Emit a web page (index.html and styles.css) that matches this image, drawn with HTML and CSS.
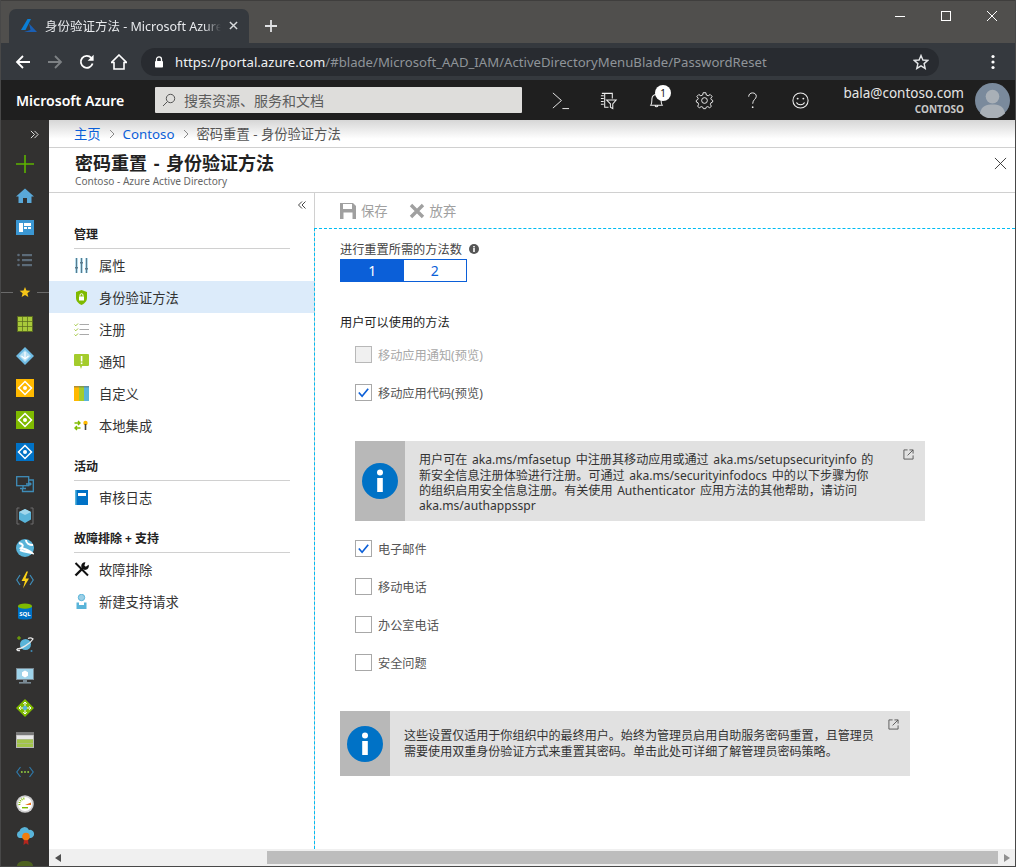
FILE: index.html
```html
<!DOCTYPE html>
<html lang="zh-CN">

<head>
    <meta charset="UTF-8">
    <meta name="viewport" content="width=device-width, initial-scale=1.0">
    <title>身份验证方法 - Microsoft Azure</title>
    <link rel="stylesheet" href="styles.css">
</head>

<body>
    <div class="window">
        <!-- browser tabs -->
        <div class="tabstrip">
            <div class="tab">
                <svg class="favicon" viewBox="0 0 16 13"><path fill="#0a7fd6" d="M6.5 0 L10 0 L4.5 11 L0 11 Z"/><path fill="#1a5fb4" d="M8 4.5 L16 13 L3 13 L9.5 11 Z"/></svg>
                <span class="tab-title">身份验证方法 - Microsoft Azure</span>
                <svg class="tab-close" viewBox="0 0 10 10"><path d="M1 1 L9 9 M9 1 L1 9" stroke="#d8dadc" stroke-width="1.6"/></svg>
            </div>
            <svg class="new-tab" viewBox="0 0 12 12"><path d="M6 0 V12 M0 6 H12" stroke="#e0e2e4" stroke-width="1.8"/></svg>
            <div class="win-controls">
                <svg viewBox="0 0 12 12"><path d="M1 6.5 H11" stroke="#fff" stroke-width="1"/></svg>
                <svg viewBox="0 0 12 12"><rect x="1.5" y="1.5" width="9" height="9" fill="none" stroke="#fff"/></svg>
                <svg viewBox="0 0 12 12"><path d="M1 1 L11 11 M11 1 L1 11" stroke="#fff" stroke-width="1"/></svg>
            </div>
        </div>

        <!-- address bar -->
        <div class="toolbar">
            <svg class="nav-icon" viewBox="0 0 16 16"><path d="M15 8 H2 M8 2 L2 8 L8 14" fill="none" stroke="#fff" stroke-width="1.8"/></svg>
            <svg class="nav-icon" viewBox="0 0 16 16"><path d="M1 8 H14 M8 2 L14 8 L8 14" fill="none" stroke="#7d8184" stroke-width="1.8"/></svg>
            <svg class="nav-icon" viewBox="0 0 16 16"><path d="M13.6 9.5 A6 6 0 1 1 12.3 3.8" fill="none" stroke="#fff" stroke-width="1.8"/><path d="M14.6 0.8 V6.8 H8.6 Z" fill="#fff"/></svg>
            <svg class="nav-icon nav-last" viewBox="0 0 16 16"><path d="M8 1 L15.5 8.5 H13 V15 H3 V8.5 H0.5 Z" fill="none" stroke="#fff" stroke-width="1.6"/></svg>
            <div class="omnibox">
                <svg class="lock" viewBox="0 0 10 12"><path d="M2.5 5 V3.4 A2.5 2.5 0 0 1 7.5 3.4 V5" fill="none" stroke="#fff" stroke-width="1.3"/><rect x="1" y="5" width="8" height="6.5" rx="0.8" fill="#fff"/></svg>
                <span class="url"><span class="url-host">https://portal.azure.com</span>/#blade/Microsoft_AAD_IAM/ActiveDirectoryMenuBlade/PasswordReset</span>
                <svg class="star" viewBox="0 0 16 16"><path d="M8 1.5 L9.9 6 L14.8 6.4 L11.1 9.6 L12.2 14.4 L8 11.8 L3.8 14.4 L4.9 9.6 L1.2 6.4 L6.1 6 Z" fill="none" stroke="#e4e6e8" stroke-width="1.4"/></svg>
            </div>
            <svg class="menu-dots" viewBox="0 0 4 16"><circle cx="2" cy="2.5" r="1.6" fill="#fff"/><circle cx="2" cy="8" r="1.6" fill="#fff"/><circle cx="2" cy="13.5" r="1.6" fill="#fff"/></svg>
        </div>

        <!-- azure top bar -->
        <header class="portal-header">
            <div class="brand">Microsoft Azure</div>
            <div class="search">
                <svg class="search-icon" viewBox="0 0 14 14"><circle cx="8.5" cy="5.5" r="4.2" fill="none" stroke="#555" stroke-width="1"/><path d="M5.5 8.5 L1 13" stroke="#555" stroke-width="1"/></svg>
                <span>搜索资源、服务和文档</span>
            </div>
            <div class="header-icons">
                <svg viewBox="0 0 20 20"><path d="M2 2 L11 10 L2 18" fill="none" stroke="#eee" stroke-width="1"/><path d="M12 18.5 H19" stroke="#eee" stroke-width="1"/></svg>
                <svg viewBox="0 0 20 20"><path d="M3 2.5 H14 V8 M6 2.5 V17 H10 M2 5 H5 M2 8 H5 M2 11 H5 M2 14 H5" fill="none" stroke="#eee" stroke-width="1.1"/><path d="M8 9.5 H18 L14.5 13.5 V18.5 L12 17 V13.5 Z" fill="none" stroke="#eee" stroke-width="1.1"/></svg>
                <div class="bell">
                    <svg viewBox="0 0 20 20"><path d="M4 15 C5.5 13 5 10 5.2 8 C5.5 5 7.5 3.6 10 3.6 C12.5 3.6 14.5 5 14.8 8 C15 10 14.5 13 16 15 Z M8.5 15.5 A1.6 1.6 0 0 0 11.5 15.5" fill="none" stroke="#eee" stroke-width="1.1"/></svg>
                    <span class="badge">1</span>
                </div>
                <svg viewBox="0 0 20 20"><circle cx="10" cy="10" r="3" fill="none" stroke="#eee" stroke-width="1"/><path d="M8.6 1.8 H11.4 L11.9 4.2 L13.9 5 L16 3.7 L18 5.7 L16.6 7.8 L17.4 9.3 L18.6 9.8 V11.6 L16.8 12.4 L16.2 14 L17.2 16.2 L15.4 17.6 L13.4 16.4 L11.8 17 L11.2 18.6 H8.8 L8.2 17 L6.6 16.4 L4.6 17.6 L2.8 16.2 L3.8 14 L3.2 12.4 L1.4 11.6 V9.8 L2.6 9.3 L3.4 7.8 L2 5.7 L4 3.7 L6.1 5 L8.1 4.2 Z" fill="none" stroke="#eee" stroke-width="1"/></svg>
                <svg viewBox="0 0 20 20"><path d="M6 6 C6 3.4 7.8 2 10 2 C12.4 2 14 3.5 14 5.6 C14 8.6 10.2 9 10.2 13.4" fill="none" stroke="#eee" stroke-width="1"/><circle cx="10.2" cy="17" r="0.9" fill="#eee"/></svg>
                <svg viewBox="0 0 20 20"><circle cx="10" cy="10" r="8" fill="none" stroke="#eee" stroke-width="1.1"/><circle cx="7" cy="8" r="1" fill="#eee"/><circle cx="13" cy="8" r="1" fill="#eee"/><path d="M5.8 12 C7 15.2 13 15.2 14.2 12" fill="none" stroke="#eee" stroke-width="1.1"/></svg>
            </div>
            <div class="account">
                <div class="account-name">bala@contoso.com</div>
                <div class="account-org">CONTOSO</div>
            </div>
            <svg class="avatar" viewBox="0 0 36 36"><circle cx="18" cy="18" r="18" fill="#7a8a9c"/><circle cx="18" cy="14" r="7" fill="#a9b0b7"/><path d="M5 31 C7 23 12 22 18 22 C24 22 29 23 31 31 A18 18 0 0 1 5 31 Z" fill="#a9b0b7"/></svg>
        </header>

        <div class="portal-body">
            <!-- service rail -->
            <nav class="rail">
                <div class="rail-toggle">
                    <svg viewBox="0 0 10 10"><path d="M1 1 L5 5 L1 9 M5 1 L9 5 L5 9" fill="none" stroke="#e0e0e0" stroke-width="1.1"/></svg>
                </div>
                <div class="rail-item"><svg viewBox="0 0 18 18"><path d="M9 0 V18 M0 9 H18" stroke="#5db300" stroke-width="1.6"/></svg></div>
                <div class="rail-item"><svg viewBox="0 0 18 18"><path d="M9 1.5 L18 9.5 H15.5 V16 H11 V11 H7 V16 H2.5 V9.5 H0 Z" fill="#59a8d8"/></svg></div>
                <div class="rail-item"><svg viewBox="0 0 18 18"><rect y="1" width="18" height="15" fill="#3b97d3"/><path d="M3 4 H7 V13 H3 Z M8 4 H15 V7 H8 Z M8 8 H11 V10 H8 Z M12 8 H15 V10 H12 Z" fill="#fff"/></svg></div>
                <div class="rail-item"><svg viewBox="0 0 18 18"><g fill="#5c6b78"><circle cx="2.5" cy="4" r="1.3"/><circle cx="2.5" cy="9" r="1.3"/><circle cx="2.5" cy="14" r="1.3"/><rect x="6" y="3" width="10" height="2.2"/><rect x="6" y="8" width="10" height="2.2"/><rect x="6" y="13" width="10" height="2.2"/></g></svg></div>
                <div class="rail-item rail-fav"><svg class="fav-star" viewBox="0 0 18 18"><path d="M9 1.5 L11.2 6.8 L17 7.2 L12.6 10.9 L14 16.5 L9 13.5 L4 16.5 L5.4 10.9 L1 7.2 L6.8 6.8 Z" fill="#f5c518"/></svg></div>
                <div class="rail-item"><svg viewBox="0 0 18 18"><rect x="1" y="1" width="16" height="16" fill="#5a6a20"/><g fill="#a8c93a"><rect x="2" y="2" width="4.2" height="4.2"/><rect x="6.9" y="2" width="4.2" height="4.2"/><rect x="11.8" y="2" width="4.2" height="4.2"/><rect x="2" y="6.9" width="4.2" height="4.2"/><rect x="6.9" y="6.9" width="4.2" height="4.2"/><rect x="11.8" y="6.9" width="4.2" height="4.2"/><rect x="2" y="11.8" width="4.2" height="4.2"/><rect x="6.9" y="11.8" width="4.2" height="4.2"/><rect x="11.8" y="11.8" width="4.2" height="4.2"/></g></svg></div>
                <div class="rail-item"><svg viewBox="0 0 18 18"><path d="M9 0 L18 9 L9 18 L0 9 Z" fill="#6fbbe3"/><path d="M9 3 L15 9 L9 15 L3 9 Z" fill="#b5dff2"/><path d="M9 5 V12 M5.5 9 L9 12 L12.5 9" fill="none" stroke="#fff" stroke-width="1.2"/></svg></div>
                <div class="rail-item"><svg viewBox="0 0 18 18"><rect width="18" height="18" fill="#ffb900"/><path d="M9 2.5 L15.5 9 L9 15.5 L2.5 9 Z" fill="none" stroke="#fff" stroke-width="1.5"/><circle cx="9" cy="9" r="2" fill="#fff"/></svg></div>
                <div class="rail-item"><svg viewBox="0 0 18 18"><rect width="18" height="18" fill="#7fba00"/><path d="M9 2.5 L15.5 9 L9 15.5 L2.5 9 Z" fill="none" stroke="#fff" stroke-width="1.5"/><circle cx="9" cy="9" r="2" fill="#fff"/></svg></div>
                <div class="rail-item"><svg viewBox="0 0 18 18"><rect width="18" height="18" fill="#0072c6"/><path d="M9 2.5 L15.5 9 L9 15.5 L2.5 9 Z" fill="none" stroke="#fff" stroke-width="1.5"/><circle cx="9" cy="9" r="2" fill="#fff"/></svg></div>
                <div class="rail-item"><svg viewBox="0 0 18 18"><g fill="none" stroke="#3f8db8" stroke-width="1.3"><rect x="0.7" y="1.7" width="12" height="9"/><path d="M4 13.5 H10 M7 11 V13.5"/><path d="M13 5 H17.3 V16.5 H6.5 V14"/><path d="M10 9 H15 M13.5 7.5 L15 9 L13.5 10.5"/></g></svg></div>
                <div class="rail-item"><svg viewBox="0 0 18 18"><path d="M3.5 1 H1 V17 H3.5 M14.5 1 H17 V17 H14.5" fill="none" stroke="#6f6f6f" stroke-width="1"/><path d="M9 2 L15 5 V12.5 L9 16 L3 12.5 V5 Z" fill="#59b4d9"/><path d="M9 8 L15 5 L9 2 L3 5 Z" fill="#a0d7ec"/></svg></div>
                <div class="rail-item"><svg viewBox="0 0 18 18"><circle cx="9" cy="9" r="9" fill="#59b4d9"/><path d="M3 4 C7 5 8 7 5 9 C8 10 13 11 16 14 C12 13 8 13 4 11 M10 1 C10 4 13 6 17 6" fill="none" stroke="#fff" stroke-width="2"/></svg></div>
                <div class="rail-item"><svg viewBox="0 0 18 18"><path d="M4 4 L0.8 9 L4 14 M14 4 L17.2 9 L14 14" fill="none" stroke="#3f8db8" stroke-width="1.2"/><path d="M10.5 0.5 L5.5 10 H9 L7 17.5 L13 7.5 H9.5 L12 0.5 Z" fill="#fcd116"/></svg></div>
                <div class="rail-item"><svg viewBox="0 0 18 18"><path d="M2 3 V15 C2 17 16 17 16 15 V3 Z" fill="#0072c6"/><ellipse cx="9" cy="3.2" rx="7" ry="2.6" fill="#7fba00"/><text class="sql-text" x="9" y="13" text-anchor="middle">SQL</text></svg></div>
                <div class="rail-item"><svg viewBox="0 0 18 18"><circle cx="9.5" cy="9.5" r="5.5" fill="#59b4d9"/><path d="M1 14 C5 14 14 9 17 4 C15 2.5 13 3 12 3.5 M1 14 C0.5 15.5 2 16 4 15.5" fill="none" stroke="#e8e8e8" stroke-width="1.3"/><path d="M3 1 V5 M1 3 H5" stroke="#7fba00" stroke-width="1"/><circle cx="15.5" cy="16" r="1" fill="#3f8db8"/></svg></div>
                <div class="rail-item"><svg viewBox="0 0 18 18"><rect y="1" width="18" height="12" fill="#7a8a94"/><rect x="1" y="2" width="16" height="10" fill="#9ed3ea"/><path d="M9 3.5 L12 5.2 V8.7 L9 10.4 L6 8.7 V5.2 Z" fill="#fff"/><rect x="7" y="13" width="4" height="2" fill="#7a8a94"/><rect x="3" y="15" width="12" height="1.6" fill="#7a8a94"/></svg></div>
                <div class="rail-item"><svg viewBox="0 0 18 18"><path d="M9 0 L18 9 L9 18 L0 9 Z" fill="#7fba00"/><path d="M9 3 V15 M3 9 H15 M7.2 4.8 L9 3 L10.8 4.8 M7.2 13.2 L9 15 L10.8 13.2 M4.8 7.2 L3 9 L4.8 10.8 M13.2 7.2 L15 9 L13.2 10.8" fill="none" stroke="#fff" stroke-width="1"/><circle cx="9" cy="9" r="2.2" fill="#59b4d9"/></svg></div>
                <div class="rail-item"><svg viewBox="0 0 18 18"><rect y="1" width="18" height="16" fill="#b8b8b8"/><rect y="1" width="18" height="3" fill="#7a7a7a"/><rect x="1" y="4.5" width="16" height="3.5" fill="#e8e8e8"/><rect x="1" y="8.5" width="16" height="3.5" fill="#a2c44a"/><rect x="1" y="12.5" width="16" height="3.5" fill="#a2c44a"/></svg></div>
                <div class="rail-item"><svg viewBox="0 0 18 18"><path d="M4.5 4 L0.8 9 L4.5 14 M13.5 4 L17.2 9 L13.5 14" fill="none" stroke="#2f78a8" stroke-width="1.2"/><g fill="#8cc63f"><circle cx="5.8" cy="9" r="1"/><circle cx="9" cy="9" r="1"/><circle cx="12.2" cy="9" r="1"/></g></svg></div>
                <div class="rail-item"><svg viewBox="0 0 18 18"><circle cx="9" cy="9" r="8.8" fill="#cfcfcf"/><circle cx="9" cy="9" r="7" fill="#fff"/><path d="M3.5 10 A5.5 5.5 0 0 1 9 3.5" fill="none" stroke="#7fba00" stroke-width="2" stroke-dasharray="1 1"/><path d="M9 10 L15 7.5 V10 Z" fill="#e8731a"/><rect x="6" y="12" width="6" height="1.4" fill="#7fba00"/></svg></div>
                <div class="rail-item"><svg viewBox="0 0 18 18"><path d="M4 11 A3.6 3.6 0 0 1 3.6 4 A5 5 0 0 1 13 3 A4 4 0 0 1 15 11 Z" fill="#59b4d9"/><path d="M8 12 L7.5 18 L10 16.3 L12.5 18 L12 12 Z" fill="#b3261e"/><circle cx="10" cy="9.5" r="3.8" fill="#f27d0c"/></svg></div>
                <div class="rail-item rail-faded"><svg viewBox="0 0 18 18"><path d="M9 2 C4 2 1 4 1 7 V10 H17 V7 C17 4 14 2 9 2 Z" fill="#7fba00"/></svg></div>
            </nav>

            <main class="blade">
                <div class="breadcrumb">
                    <a class="crumb-link">主页</a>
                    <svg class="crumb-sep" viewBox="0 0 6 10"><path d="M1 1 L5 5 L1 9" fill="none" stroke="#888" stroke-width="1"/></svg>
                    <a class="crumb-link">Contoso</a>
                    <svg class="crumb-sep" viewBox="0 0 6 10"><path d="M1 1 L5 5 L1 9" fill="none" stroke="#888" stroke-width="1"/></svg>
                    <span>密码重置 - 身份验证方法</span>
                </div>

                <div class="blade-title">
                    <div>
                        <h1>密码重置 - 身份验证方法</h1>
                        <div class="blade-sub">Contoso - Azure Active Directory</div>
                    </div>
                    <svg class="blade-close" viewBox="0 0 14 14"><path d="M1 1 L13 13 M13 1 L1 13" stroke="#333" stroke-width="1"/></svg>
                </div>

                <div class="blade-main">
                    <aside class="menu">
                        <div class="menu-collapse">
                            <svg viewBox="0 0 8 8"><path d="M4 0.5 L0.5 4 L4 7.5 M7.5 0.5 L4 4 L7.5 7.5" fill="none" stroke="#444" stroke-width="1"/></svg>
                        </div>
                        <div class="menu-heading">管理</div>
                        <div class="menu-item">
                            <svg viewBox="0 0 15 15"><g fill="#b5dcec"><rect x="1" y="0" width="3" height="15"/><rect x="6" y="0" width="3" height="15"/><rect x="11" y="0" width="3" height="15"/></g><g fill="#5a7a8c"><rect x="2" y="0" width="1" height="15"/><rect x="7" y="0" width="1" height="15"/><rect x="12" y="0" width="1" height="15"/><rect x="1" y="9" width="3" height="1.5"/><rect x="6" y="4" width="3" height="1.5"/><rect x="11" y="10" width="3" height="1.5"/></g></svg>
                            <span>属性</span>
                        </div>
                        <div class="menu-item is-active">
                            <svg viewBox="0 0 15 15"><path d="M7.5 0 L13 2 V8 C13 11.5 10 13.8 7.5 15 C5 13.8 2 11.5 2 8 V2 Z" fill="#7fba00"/><rect x="5" y="6.5" width="5" height="4" fill="#fff"/><path d="M6 6.5 V5.2 A1.5 1.5 0 0 1 9 5.2 V6.5" fill="none" stroke="#fff" stroke-width="1"/></svg>
                            <span>身份验证方法</span>
                        </div>
                        <div class="menu-item">
                            <svg viewBox="0 0 15 15"><g fill="none" stroke="#a0c63c" stroke-width="1"><path d="M0.5 2.5 L1.8 3.8 L4 1.5"/><path d="M0.5 7.5 L1.8 8.8 L4 6.5"/><path d="M0.5 12.5 L1.8 13.8 L4 11.5"/></g><path d="M5.5 2.5 H15 M5.5 7.5 H15 M5.5 12.5 H15" stroke="#aaa" stroke-width="1"/></svg>
                            <span>注册</span>
                        </div>
                        <div class="menu-item">
                            <svg viewBox="0 0 15 15"><path d="M1 0 H14 A1 1 0 0 1 15 1 V11 A1 1 0 0 1 14 12 H8 L7 15 L6 12 H1 A1 1 0 0 1 0 11 V1 A1 1 0 0 1 1 0 Z" fill="#a4cc2c"/><rect x="6.8" y="2" width="1.6" height="5.5" fill="#fff"/><rect x="6.8" y="8.5" width="1.6" height="1.6" fill="#fff"/></svg>
                            <span>通知</span>
                        </div>
                        <div class="menu-item">
                            <svg viewBox="0 0 15 15"><rect width="5" height="15" fill="#ffb900"/><rect x="5" width="5" height="15" fill="#a4cc2c"/><rect x="10" width="5" height="15" fill="#59b4d9"/><rect width="15" height="1.5" fill="#666" opacity="0.5"/></svg>
                            <span>自定义</span>
                        </div>
                        <div class="menu-item">
                            <svg viewBox="0 0 15 15"><path d="M0.5 5 H6 M4 3 L6 5 L4 7 M6.5 10 H1 M3 8 L1 10 L3 12" fill="none" stroke="#7fba00" stroke-width="1.4"/><circle cx="11.5" cy="5" r="2.2" fill="#ffb900"/><rect x="10.7" y="6" width="1.6" height="6" fill="#444"/></svg>
                            <span>本地集成</span>
                        </div>
                        <div class="menu-heading">活动</div>
                        <div class="menu-item">
                            <svg viewBox="0 0 15 15"><path d="M1 0 H14 V15 H1 Z" fill="#0072c6"/><rect x="1" width="1.5" height="15" fill="#59b4d9"/><rect x="4" y="3" width="8" height="3" fill="#fff"/></svg>
                            <span>审核日志</span>
                        </div>
                        <div class="menu-heading">故障排除 + 支持</div>
                        <div class="menu-item">
                            <svg viewBox="0 0 15 15"><path d="M1.5 13.5 L9.5 5.5" stroke="#111" stroke-width="2.4"/><path d="M14.6 2.8 A3.8 3.8 0 1 1 11.4 0.3 L10.4 3.4 L11.8 4.8 Z" fill="#111"/><path d="M1.5 1 L14 13.5" stroke="#111" stroke-width="2"/></svg>
                            <span>故障排除</span>
                        </div>
                        <div class="menu-item">
                            <svg viewBox="0 0 15 15"><circle cx="7.5" cy="3.5" r="3.2" fill="#9ccfe6" stroke="#59b4d9"/><path d="M2.5 15 V8.5 H5 V11 H10 V8.5 H12.5 V15 Z" fill="#59b4d9"/></svg>
                            <span>新建支持请求</span>
                        </div>
                    </aside>

                    <section class="pane">
                        <div class="commands">
                            <span class="command">
                                <svg viewBox="0 0 16 16"><path d="M0 0 H13 L16 3 V16 H0 Z" fill="#a0a0a0"/><rect x="3" y="1" width="9" height="5" fill="#fff"/><rect x="3.5" y="9.5" width="9" height="6.5" fill="#fff"/></svg>
                                保存
                            </span>
                            <span class="command">
                                <svg viewBox="0 0 16 16"><path d="M2 2 L14 14 M14 2 L2 14" stroke="#a0a0a0" stroke-width="3.4"/></svg>
                                放弃
                            </span>
                        </div>

                        <div class="pane-content">
                            <div class="field-label">
                                进行重置所需的方法数
                                <svg class="hint" viewBox="0 0 10 10"><circle cx="5" cy="5" r="5" fill="#555"/><rect x="4.2" y="4" width="1.6" height="4" fill="#fff"/><rect x="4.2" y="2" width="1.6" height="1.4" fill="#fff"/></svg>
                            </div>
                            <div class="toggle">
                                <span class="toggle-opt is-on">1</span>
                                <span class="toggle-opt">2</span>
                            </div>

                            <div class="methods-label">用户可以使用的方法</div>

                            <div class="methods">
                                <label class="check is-disabled"><span class="box"></span>移动应用通知(预览)</label>
                                <label class="check">
                                    <span class="box"><svg viewBox="0 0 16 16"><path d="M3 8 L6.5 12 L13 4" fill="none" stroke="#0b5fd8" stroke-width="1.8"/></svg></span>移动应用代码(预览)
                                </label>
                            </div>

                            <div class="notice notice-nested">
                                <div class="notice-strip">
                                    <svg viewBox="0 0 36 36"><circle cx="18" cy="18" r="18" fill="#0072c6"/><circle cx="18" cy="9.5" r="3" fill="#fff"/><rect x="15.2" y="15" width="5.6" height="14" fill="#fff"/></svg>
                                </div>
                                <p class="notice-text">用户可在 aka.ms/mfasetup 中注册其移动应用或通过 aka.ms/setupsecurityinfo 的<br>新安全信息注册体验进行注册。可通过 aka.ms/securityinfodocs 中的以下步骤为你<br>的组织启用安全信息注册。有关使用 Authenticator 应用方法的其他帮助，请访问<br>aka.ms/authappsspr</p>
                                <svg class="notice-link" viewBox="0 0 12 12"><path d="M5 1 H1 V11 H11 V7 M7 1 H11 V5 M11 1 L5 7" fill="none" stroke="#555" stroke-width="1"/></svg>
                            </div>

                            <div class="methods methods-rest">
                                <label class="check">
                                    <span class="box"><svg viewBox="0 0 16 16"><path d="M3 8 L6.5 12 L13 4" fill="none" stroke="#0b5fd8" stroke-width="1.8"/></svg></span>电子邮件
                                </label>
                                <label class="check"><span class="box"></span>移动电话</label>
                                <label class="check"><span class="box"></span>办公室电话</label>
                                <label class="check"><span class="box"></span>安全问题</label>
                            </div>

                            <div class="notice notice-bottom">
                                <div class="notice-strip">
                                    <svg viewBox="0 0 36 36"><circle cx="18" cy="18" r="18" fill="#0072c6"/><circle cx="18" cy="9.5" r="3" fill="#fff"/><rect x="15.2" y="15" width="5.6" height="14" fill="#fff"/></svg>
                                </div>
                                <p class="notice-text">这些设置仅适用于你组织中的最终用户。始终为管理员启用自助服务密码重置，且管理员<br>需要使用双重身份验证方式来重置其密码。单击此处可详细了解管理员密码策略。</p>
                                <svg class="notice-link" viewBox="0 0 12 12"><path d="M5 1 H1 V11 H11 V7 M7 1 H11 V5 M11 1 L5 7" fill="none" stroke="#555" stroke-width="1"/></svg>
                            </div>
                        </div>
                    </section>
                </div>

                <div class="hscroll">
                    <svg class="hscroll-arrow" viewBox="0 0 6 8"><path d="M6 0 V8 L0 4 Z" fill="#505050"/></svg>
                    <div class="hscroll-thumb"></div>
                    <svg class="hscroll-arrow" viewBox="0 0 6 8"><path d="M0 0 V8 L6 4 Z" fill="#909090"/></svg>
                </div>
            </main>
        </div>
    </div>
</body>

</html>
```

FILE: styles.css
```css
* {
    box-sizing: border-box;
}

html,
body {
    margin: 0;
    padding: 0;
    height: 100%;
    overflow: hidden;
}

body {
    font-family: "Noto Sans", "Noto Sans CJK SC", sans-serif;
    background: #fff;
    color: #333;
}

svg {
    display: block;
    flex: none;
}

.window {
    width: 1016px;
    height: 867px;
    display: flex;
    flex-direction: column;
    overflow: hidden;
    border: solid #484848;
    border-width: 0 1px 1px 1px;
}

/* browser chrome */
.tabstrip {
    height: 43px;
    flex: none;
    display: flex;
    align-items: flex-end;
    padding-left: 8px;
    background: #504f4d;
    border-top: 1px solid #3f3e3d;
}

.tab {
    width: 240px;
    height: 34px;
    display: flex;
    align-items: center;
    padding: 0 11px 2px 12px;
    background: #35393e;
    border-radius: 7px 7px 0 0;
}

.favicon {
    width: 16px;
    height: 13px;
}

.tab-title {
    width: 176px;
    margin-left: 8px;
    overflow: hidden;
    white-space: nowrap;
    font-size: 12.5px;
    color: #e8eaed;
    -webkit-mask-image: linear-gradient(to right, #000 90%, transparent);
    mask-image: linear-gradient(to right, #000 90%, transparent);
}

.tab-close {
    width: 9px;
    height: 9px;
    margin-left: 8px;
}

.new-tab {
    width: 12px;
    height: 12px;
    margin: 0 0 11px 16px;
}

.win-controls {
    margin: 0 0 21px auto;
    display: flex;
    gap: 34px;
    padding-right: 17px;
}

.win-controls svg {
    width: 12px;
    height: 12px;
}

.toolbar {
    height: 37px;
    flex: none;
    display: flex;
    align-items: center;
    padding: 0 0 0 14px;
    background: #35393e;
}

.nav-icon {
    width: 16px;
    height: 16px;
    margin-right: 16px;
}

.nav-last {
    margin-right: 14px;
}

.omnibox {
    width: 798px;
    height: 28px;
    display: flex;
    align-items: center;
    padding: 0 10px 0 13px;
    border-radius: 14px;
    background: #282b30;
}

.lock {
    width: 10px;
    height: 12px;
}

.url {
    margin-left: 11px;
    font-size: 13.17px;
    white-space: nowrap;
    color: #8f9499;
}

.url-host {
    color: #f0f2f4;
}

.star {
    width: 16px;
    height: 16px;
    margin-left: auto;
}

.menu-dots {
    width: 4px;
    height: 16px;
    margin-left: 52px;
}

/* azure header */
.portal-header {
    height: 40px;
    flex: none;
    display: flex;
    align-items: center;
    padding-left: 15px;
    background: #1f1f1f;
    color: #fff;
}

.brand {
    width: 139px;
    font-size: 14.1px;
    font-weight: 600;
    white-space: nowrap;
}

.search {
    width: 367px;
    height: 26px;
    display: flex;
    align-items: center;
    padding-left: 7px;
    background: #dedddb;
    border-radius: 1px;
    font-size: 14px;
    color: #5c5c5c;
}

.search-icon {
    width: 14px;
    height: 14px;
    margin-right: 8px;
}

.header-icons {
    display: flex;
    align-items: center;
    gap: 29px;
    margin-left: 29px;
}

.header-icons svg {
    width: 19px;
    height: 19px;
}

.bell {
    position: relative;
}

.badge {
    position: absolute;
    top: -6px;
    left: 8px;
    width: 16px;
    height: 16px;
    border-radius: 50%;
    background: #fff;
    color: #111;
    font-size: 10px;
    line-height: 16px;
    text-align: center;
}

.account {
    margin-left: auto;
    text-align: right;
}

.account-name {
    font-size: 13.5px;
    line-height: 18px;
    color: #e6e6e6;
}

.account-org {
    font-size: 10px;
    font-weight: 700;
    line-height: 14px;
    color: #c8c8c8;
}

.avatar {
    width: 35px;
    height: 35px;
    margin: 0 5px 0 11px;
}

/* left service rail */
.portal-body {
    flex: 1;
    min-height: 0;
    display: flex;
}

.rail {
    width: 48px;
    flex: none;
    overflow: hidden;
    background: #323130;
}

.rail-toggle {
    height: 28px;
    display: flex;
    align-items: center;
    justify-content: flex-end;
    padding-right: 10px;
}

.rail-toggle svg {
    width: 9px;
    height: 9px;
}

.rail-item {
    height: 32px;
    display: flex;
    align-items: center;
    justify-content: center;
}

.rail-item svg {
    width: 18px;
    height: 18px;
}

.rail-item .fav-star {
    width: 12px;
    height: 12px;
}

.rail-fav {
    gap: 5px;
}

.rail-fav::before,
.rail-fav::after {
    content: "";
    flex: 1;
    height: 1px;
    background: #6a6a6a;
}

.rail-fav::before {
    margin-right: 1px;
}

.rail-fav::after {
    margin-left: 1px;
}

.rail-faded {
    opacity: 0.35;
}

.sql-text {
    font-size: 6px;
    font-weight: 700;
    fill: #fff;
}

/* blade */
.blade {
    flex: 1;
    min-width: 0;
    display: flex;
    flex-direction: column;
    background: #fff;
}

.breadcrumb {
    height: 28px;
    flex: none;
    display: flex;
    align-items: center;
    gap: 8px;
    padding-left: 25px;
    font-size: 13.3px;
    color: #555;
    background: linear-gradient(#d6d6d6, #fff 70%);
    border-bottom: 1px solid #d0d0d0;
}

.crumb-link {
    color: #0b5fd8;
}

.crumb-sep {
    width: 6px;
    height: 10px;
}

.blade-title {
    height: 45px;
    flex: none;
    display: flex;
    align-items: flex-start;
    justify-content: space-between;
    padding: 4px 8px 0 26px;
    border-bottom: 1px solid #d0d0d0;
}

.blade-title h1 {
    margin: 0;
    font-size: 18px;
    line-height: 22px;
    font-weight: 700;
    word-spacing: 2px;
    color: #222;
}

.blade-sub {
    font-size: 10.1px;
    line-height: 14px;
    color: #666;
}

.blade-close {
    width: 13px;
    height: 13px;
    margin-top: 5px;
}

.blade-main {
    flex: 1;
    min-height: 0;
    display: flex;
}

/* blade menu */
.menu {
    width: 265px;
    flex: none;
}

.menu-collapse {
    height: 16px;
    display: flex;
    justify-content: flex-end;
    align-items: flex-end;
    padding-right: 8px;
}

.menu-collapse svg {
    width: 8px;
    height: 8px;
}

.menu-heading {
    height: 40px;
    margin: 0 24px 0 25px;
    padding-bottom: 5px;
    display: flex;
    align-items: flex-end;
    font-size: 12px;
    line-height: 16px;
    font-weight: 700;
    color: #222;
    border-bottom: 1px solid #d0d0d0;
}

.menu-item {
    height: 32px;
    display: flex;
    align-items: center;
    gap: 10px;
    padding-left: 25px;
    font-size: 13.3px;
    color: #333;
}

.menu-item svg {
    width: 15px;
    height: 15px;
}

.menu-item.is-active {
    background: #dcebfa;
}

/* right pane */
.pane {
    flex: 1;
    min-width: 0;
    display: flex;
    flex-direction: column;
    border-left: 1px solid #d0d0d0;
}

.commands {
    height: 35px;
    flex: none;
    display: flex;
    align-items: center;
    gap: 21px;
    padding-left: 25px;
    font-size: 13.3px;
    color: #a0a0a0;
}

.command {
    display: flex;
    align-items: center;
    gap: 5px;
}

.command svg {
    width: 16px;
    height: 16px;
}

.pane-content {
    flex: 1;
    min-height: 0;
    margin-left: -1px;
    padding: 11px 0 0 25px;
    border-top: 1px dashed #00bcf2;
    border-left: 1px dashed #00bcf2;
}

.field-label {
    display: flex;
    align-items: center;
    gap: 6px;
    height: 17px;
    font-size: 12.2px;
    color: #444;
}

.hint {
    width: 10px;
    height: 10px;
    margin-left: 1px;
}

.toggle {
    width: 127px;
    height: 23px;
    margin-top: 2px;
    display: flex;
    border: 1px solid #0b5fd8;
    font-size: 14px;
    line-height: 21px;
    text-align: center;
    color: #0b5fd8;
}

.toggle-opt {
    flex: 1;
}

.toggle-opt.is-on {
    background: #0b5fd8;
    color: #fff;
}

.methods-label {
    margin-top: 32px;
    height: 18px;
    line-height: 18px;
    font-size: 12.2px;
    color: #222;
}

.methods {
    display: flex;
    flex-direction: column;
    gap: 21px;
    margin: 14px 0 0 15px;
}

.methods-rest {
    margin-top: 19px;
}

.check {
    height: 17px;
    display: flex;
    align-items: center;
    gap: 6px;
    font-size: 12.2px;
    color: #555;
}

.box {
    width: 17px;
    height: 17px;
    flex: none;
    border: 1px solid #a8a8a8;
    background: #fff;
}

.box svg {
    width: 15px;
    height: 15px;
}

.check.is-disabled {
    color: #a8a8a8;
}

.is-disabled .box {
    background: #f0f0f0;
    border-color: #b8b8b8;
}

.notice {
    position: relative;
    width: 570px;
    display: flex;
    align-items: center;
    background: #e1e1e1;
    line-height: 15.3px;
    color: #333;
}

.notice-nested {
    height: 80px;
    margin: 40px 0 0 15px;
    font-size: 12.1px;
    word-spacing: 1.5px;
}

.notice-nested .notice-text {
    margin-top: 4px;
}

.notice-bottom {
    height: 65px;
    margin-top: 40px;
    font-size: 12.05px;
}

.notice-strip {
    width: 50px;
    align-self: stretch;
    flex: none;
    display: flex;
    align-items: center;
    justify-content: center;
    background: #b8b8b8;
}

.notice-strip svg {
    width: 36px;
    height: 36px;
}

.notice-text {
    margin: 0 0 0 14px;
    white-space: nowrap;
}

.notice-link {
    position: absolute;
    top: 8px;
    right: 11px;
    width: 11px;
    height: 11px;
}

/* bottom scrollbar */
.hscroll {
    height: 17px;
    flex: none;
    display: flex;
    align-items: center;
    padding: 0 5px 0 6px;
    background: #f0f0f0;
}

.hscroll-arrow {
    width: 6px;
    height: 8px;
}

.hscroll-thumb {
    width: 731px;
    height: 13px;
    margin: 0 6px 0 206px;
    background: #bdbdbd;
}
```
